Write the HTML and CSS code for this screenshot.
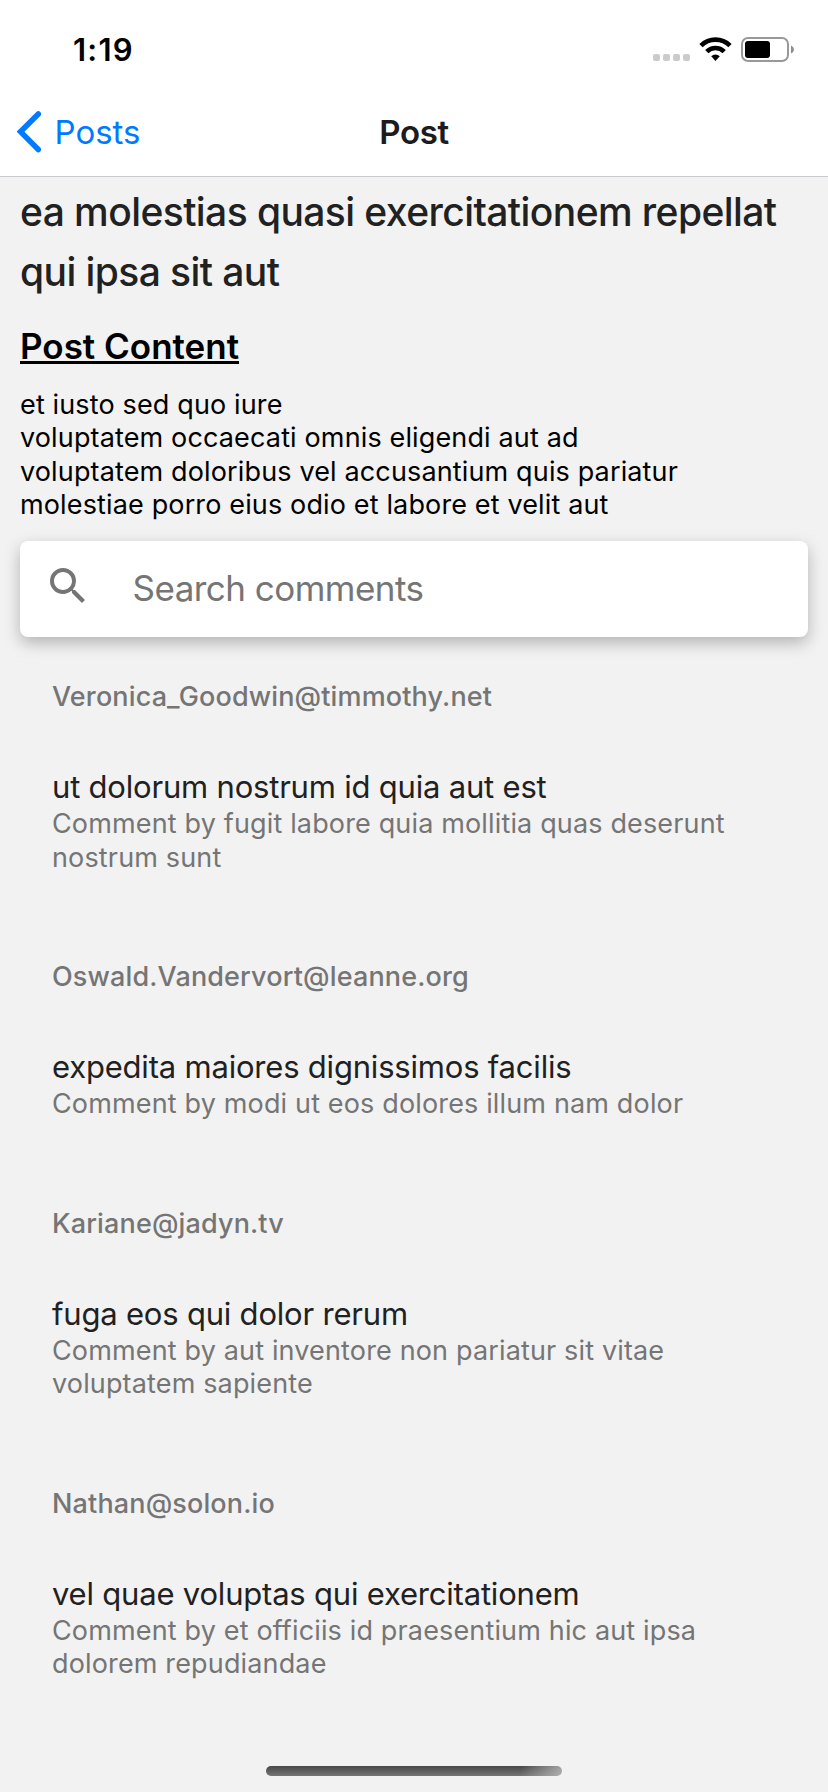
FILE: index.html
```html
<!DOCTYPE html>
<html lang="en">
<head>
<meta charset="utf-8">
<title>Post</title>
<link rel="stylesheet" href="styles.css">
</head>
<body>
<div class="screen">
  <header class="header">
    <div class="status">
      <span class="time">1:19</span>
      <svg class="status-icons" width="144" height="26" viewBox="0 0 144 26">
        <g fill="#cbcbcb">
          <rect x="0" y="17" width="7" height="7" rx="2"/>
          <rect x="10" y="17" width="7" height="7" rx="2"/>
          <rect x="20" y="17" width="7" height="7" rx="2"/>
          <rect x="30" y="17" width="7" height="7" rx="2"/>
        </g>
        <g fill="none" stroke="#000" stroke-width="4.6">
          <path d="M48 8.600a20.500 20.500 0 0 1 29 0"/>
          <path d="M53.800 14.600a12.300 12.300 0 0 1 17.400 0"/>
        </g>
        <path d="M58.200 19.200a6.200 6.200 0 0 1 8.600 0L62.500 24z"/>
        <rect x="89" y="1" width="46" height="23" rx="6" fill="none" stroke="#999" stroke-width="2"/>
        <rect x="92" y="4" width="25" height="17" rx="3"/>
        <path d="M138 8.500q3 1.500 3 4t-3 4z" fill="#8c8c8c"/>
      </svg>
    </div>
    <nav class="navbar">
      <a class="back">
        <svg width="24" height="42" viewBox="0 0 24 42"><path d="M21.300 3 3.500 20.700 21.300 38.500" fill="none" stroke="#007aff" stroke-width="5.500" stroke-linecap="round" stroke-linejoin="miter"/></svg>
        <span class="back-label">Posts</span>
      </a>
      <h1 class="nav-title">Post</h1>
    </nav>
  </header>
  <main class="content">
    <h2 class="post-title">ea molestias quasi exercitationem repellat<br>qui ipsa sit aut</h2>
    <h3 class="section-title">Post Content</h3>
    <p class="post-body">et iusto sed quo iure<br>voluptatem occaecati omnis eligendi aut ad<br>voluptatem doloribus vel accusantium quis pariatur<br>molestiae porro eius odio et labore et velit aut</p>
    <div class="search">
      <svg class="search-icon" width="48" height="48" viewBox="0 0 24 24"><path fill="#757575" d="M15.500 14h-.79l-.28-.27A6.470 6.470 0 0 0 16 9.500 6.500 6.500 0 1 0 9.500 16c1.610 0 3.090-.59 4.230-1.570l.27.28v.79l5 4.990L20.490 19zm-6 0C7.010 14 5 11.990 5 9.500S7.010 5 9.500 5 14 7.010 14 9.500 11.990 14 9.500 14"/></svg>
      <span class="placeholder">Search comments</span>
    </div>
    <section class="comments">
      <article class="comment">
        <div class="email">Veronica_Goodwin@timmothy.net</div>
        <div class="name">ut dolorum nostrum id quia aut est</div>
        <div class="text">Comment by fugit labore quia mollitia quas deserunt<br>nostrum sunt</div>
      </article>
      <article class="comment">
        <div class="email">Oswald.Vandervort@leanne.org</div>
        <div class="name">expedita maiores dignissimos facilis</div>
        <div class="text">Comment by modi ut eos dolores illum nam dolor</div>
      </article>
      <article class="comment">
        <div class="email">Kariane@jadyn.tv</div>
        <div class="name">fuga eos qui dolor rerum</div>
        <div class="text">Comment by aut inventore non pariatur sit vitae<br>voluptatem sapiente</div>
      </article>
      <article class="comment">
        <div class="email">Nathan@solon.io</div>
        <div class="name">vel quae voluptas qui exercitationem</div>
        <div class="text">Comment by et officiis id praesentium hic aut ipsa<br>dolorem repudiandae</div>
      </article>
    </section>
  </main>
  <div class="home-indicator"></div>
</div>
</body>
</html>
```
FILE: styles.css
```css
* { box-sizing: border-box; }
body, h1, h2, h3, p { margin: 0; }
body { font-family: Inter, "Liberation Sans", sans-serif; background: #f2f2f2; }
.screen { position: relative; width: 828px; height: 1792px; overflow: hidden; background: #f2f2f2; }
.header { height: 177px; background: #fff; border-bottom: 1px solid #c9c9ce; }
.status { display: flex; justify-content: space-between; height: 88px; padding: 30px 31px 0 73px; }
.time { font-size: 31px; line-height: 40px; font-weight: 600; letter-spacing: 1.200px; color: #000; }
.status-icons { display: block; margin-top: 7px; }
.navbar { display: grid; grid-template-columns: 1fr auto 1fr; align-items: center; height: 88px; padding: 0 17px; }
.back { display: flex; align-items: center; gap: 13.500px; color: #007aff; font-size: 33px; line-height: 40px; }
.nav-title { font-size: 33px; line-height: 40px; font-weight: 600; letter-spacing: -.3px; color: #1c1c1e; }
.content { padding: 5px 20px 0; }
.post-title { font-size: 39px; line-height: 60px; font-weight: 500; letter-spacing: -.58px; color: #212121; white-space: nowrap; }
.section-title { margin-top: 22px; font-size: 35px; line-height: 44px; font-weight: 600; color: #000; text-decoration: underline; text-decoration-thickness: 3px; text-underline-offset: 2px; text-decoration-skip-ink: none; }
.post-body { margin-top: 20px; font-size: 27px; line-height: 33.400px; letter-spacing: .14px; color: #000; white-space: nowrap; }
.search { display: flex; align-items: center; gap: 40.500px; height: 96px; margin-top: 19.400px; padding: 0 24px; border-radius: 8px; background: #fff; box-shadow: 0 6px 16px rgba(0,0,0,.26); }
.search-icon { margin-top: -6px; }
.placeholder { margin-top: -2px; font-size: 35px; line-height: 44px; letter-spacing: -.53px; color: #757575; }
.comments { padding: 43px 32px 0; white-space: nowrap; }
.comment { padding-bottom: 87.200px; }
.email { font-size: 27px; line-height: 34px; font-weight: 500; letter-spacing: .14px; color: #757575; }
.name { margin-top: 54px; font-size: 31px; line-height: 38px; letter-spacing: -.2px; color: #212121; }
.text { padding-top: 1.300px; margin-bottom: -1.300px; font-size: 27px; line-height: 33.400px; letter-spacing: .15px; color: #757575; }
.home-indicator { position: absolute; left: 266px; top: 1766px; width: 296px; height: 10px; border-radius: 5px; background: linear-gradient(100deg, transparent 86%, rgba(190,190,190,.8)), linear-gradient(#484848, #757575); }
```
